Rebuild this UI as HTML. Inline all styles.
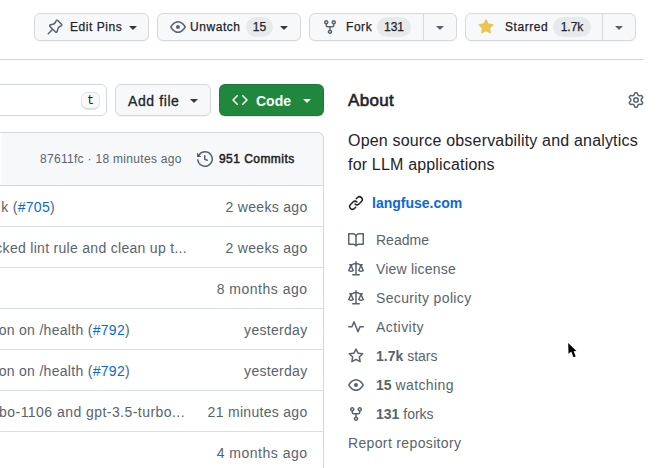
<!DOCTYPE html>
<html><head><meta charset="utf-8">
<style>
*{box-sizing:border-box;margin:0;padding:0}
html,body{width:666px;height:468px;overflow:hidden;background:#fff}
body{position:relative;font-family:"Liberation Sans",sans-serif;color:#1f2328}
.a{position:absolute;white-space:nowrap}
.btn{position:absolute;background:#f6f8fa;border:1px solid #d8d8d9;border-radius:6px;box-shadow:0 1px 0 rgba(31,35,40,0.04)}
.t12{font-size:12px;line-height:16px;color:#1f2328;-webkit-text-stroke:0.25px #1f2328;letter-spacing:0.55px}
.ic{position:absolute;fill:#59636e}
.cnt{position:absolute;height:20px;border-radius:10px;background:#e8e9ea;font-size:12px;line-height:20px;text-align:center;color:#1f2328;-webkit-text-stroke:0.25px #1f2328;letter-spacing:0}
.caret{position:absolute;width:16px;height:16px;fill:#34383d}
.div{position:absolute;top:0;width:1px;height:26px;background:#d8d8d9}
.row{position:absolute;left:-10px;width:334px;height:41px;border-bottom:1px solid #d8dee4;border-right:1px solid #d6d7d9}
.msg{position:absolute;font-size:14px;line-height:20px;color:#59636e;white-space:nowrap;letter-spacing:0.3px}
.date{position:absolute;right:358.5px;font-size:14px;line-height:20px;color:#59636e;white-space:nowrap;letter-spacing:0.3px}
.lnk{color:#0969da}
.li{position:absolute;left:348px;font-size:14px;line-height:20px;color:#59636e}
.li svg{position:absolute;left:0;top:2px;fill:#59636e}
.li span{position:absolute;left:28px;white-space:nowrap}
</style></head><body>

<!-- top action buttons -->
<div class="btn" style="left:34px;top:13px;width:115px;height:28px">
  <svg class="ic" style="left:12px;top:5px" width="16" height="16" viewBox="0 0 16 16"><path d="m11.294.984 3.722 3.722a1.75 1.75 0 0 1-.504 2.826l-1.327.613a3.089 3.089 0 0 0-1.707 2.084l-.584 2.454c-.317 1.332-1.972 1.8-2.94.832L5.75 11.311 1.78 15.28a.749.749 0 1 1-1.06-1.06l3.969-3.97-2.204-2.204c-.968-.968-.5-2.623.832-2.94l2.454-.584a3.08 3.08 0 0 0 2.084-1.707l.613-1.327a1.75 1.75 0 0 1 2.826-.504ZM6.283 9.723l2.732 2.731a.25.25 0 0 0 .42-.119l.584-2.454a4.586 4.586 0 0 1 2.537-3.098l1.328-.613a.25.25 0 0 0 .072-.404l-3.722-3.722a.25.25 0 0 0-.404.072l-.613 1.328a4.584 4.584 0 0 1-3.098 2.537l-2.454.584a.25.25 0 0 0-.119.42l2.731 2.732Z"/></svg>
  <div class="a t12" style="left:35px;top:5px">Edit Pins</div>
  <svg class="caret" style="left:90px;top:5px" viewBox="0 0 16 16"><path d="m4.427 7.427 3.396 3.396a.25.25 0 0 0 .354 0l3.396-3.396A.25.25 0 0 0 11.396 7H4.604a.25.25 0 0 0-.177.427Z"/></svg>
</div>

<div class="btn" style="left:157px;top:13px;width:144px;height:28px">
  <svg class="ic" style="left:12px;top:5px" width="16" height="16" viewBox="0 0 16 16"><path d="M8 2c1.981 0 3.671.992 4.933 2.078 1.27 1.091 2.187 2.345 2.637 3.023a1.62 1.62 0 0 1 0 1.798c-.45.678-1.367 1.932-2.637 3.023C11.67 13.008 9.981 14 8 14c-1.981 0-3.671-.992-4.933-2.078C1.797 10.83.88 9.576.43 8.898a1.62 1.62 0 0 1 0-1.798c.45-.677 1.367-1.931 2.637-3.022C4.33 2.992 6.019 2 8 2ZM1.679 7.932a.12.12 0 0 0 0 .136c.411.622 1.241 1.75 2.366 2.717C5.176 11.758 6.527 12.5 8 12.5c1.473 0 2.825-.742 3.955-1.715 1.124-.967 1.954-2.096 2.366-2.717a.12.12 0 0 0 0-.136c-.412-.621-1.242-1.75-2.366-2.717C10.824 4.242 9.473 3.5 8 3.5c-1.473 0-2.825.742-3.955 1.715-1.124.967-1.954 2.096-2.366 2.717ZM8 10a2 2 0 1 1-.001-3.999A2 2 0 0 1 8 10Z"/></svg>
  <div class="a t12" style="left:32px;top:5px">Unwatch</div>
  <div class="cnt" style="left:88px;top:3px;width:27px">15</div>
  <svg class="caret" style="left:118px;top:5px" viewBox="0 0 16 16"><path d="m4.427 7.427 3.396 3.396a.25.25 0 0 0 .354 0l3.396-3.396A.25.25 0 0 0 11.396 7H4.604a.25.25 0 0 0-.177.427Z"/></svg>
</div>

<div class="btn" style="left:309px;top:13px;width:148px;height:28px">
  <svg class="ic" style="left:12px;top:5px" width="16" height="16" viewBox="0 0 16 16"><path d="M5 5.372v.878c0 .414.336.75.75.75h4.5a.75.75 0 0 0 .75-.75v-.878a2.25 2.25 0 1 1 1.5 0v.878a2.25 2.25 0 0 1-2.25 2.25h-1.5v2.128a2.251 2.251 0 1 1-1.5 0V8.5h-1.5A2.25 2.25 0 0 1 3.5 6.25v-.878a2.25 2.25 0 1 1 1.5 0ZM5 3.25a.75.75 0 1 0-1.5 0 .75.75 0 0 0 1.5 0Zm6.75.75a.75.75 0 1 0 0-1.5.75.75 0 0 0 0 1.5Zm-3 8.75a.75.75 0 1 0-1.5 0 .75.75 0 0 0 1.5 0Z"/></svg>
  <div class="a t12" style="left:36px;top:5px">Fork</div>
  <div class="cnt" style="left:67px;top:3px;width:34px">131</div>
  <div class="div" style="left:113px"></div>
  <svg class="caret" style="left:122px;top:5px;fill:#59636e" viewBox="0 0 16 16"><path d="m4.427 7.427 3.396 3.396a.25.25 0 0 0 .354 0l3.396-3.396A.25.25 0 0 0 11.396 7H4.604a.25.25 0 0 0-.177.427Z"/></svg>
</div>

<div class="btn" style="left:465px;top:13px;width:171px;height:28px">
  <svg class="ic" style="left:12px;top:5px;fill:#eac54f" width="16" height="16" viewBox="0 0 16 16"><path d="M8 .25a.75.75 0 0 1 .673.418l1.882 3.815 4.21.612a.75.75 0 0 1 .416 1.279l-3.046 2.97.719 4.192a.751.751 0 0 1-1.088.791L8 12.347l-3.766 1.98a.75.75 0 0 1-1.088-.79l.72-4.194L.818 6.374a.75.75 0 0 1 .416-1.28l4.21-.611L7.327.668A.75.75 0 0 1 8 .25Z"/></svg>
  <div class="a t12" style="left:39px;top:5px">Starred</div>
  <div class="cnt" style="left:87px;top:3px;width:38px">1.7k</div>
  <div class="div" style="left:136px"></div>
  <svg class="caret" style="left:145px;top:5px;fill:#59636e" viewBox="0 0 16 16"><path d="m4.427 7.427 3.396 3.396a.25.25 0 0 0 .354 0l3.396-3.396A.25.25 0 0 0 11.396 7H4.604a.25.25 0 0 0-.177.427Z"/></svg>
</div>

<div class="a" style="left:0;top:59px;width:644px;height:1px;background:#d8d8d8"></div>

<!-- search / add file / code -->
<div class="a" style="left:-10px;top:84px;width:117px;height:32px;border:1px solid #d1d9e0;border-radius:6px;background:#fff"></div>
<div class="a" style="left:81px;top:92px;width:19px;height:18px;border:1px solid #e1e4e8;border-radius:6px;background:#f6f8fa;box-shadow:inset 0 -1px 0 #d8dde2;font-family:'Liberation Mono',monospace;font-size:12px;line-height:16px;text-align:center;color:#1f2328">t</div>

<div class="btn" style="left:115px;top:84px;width:96px;height:32px">
  <div class="a" style="left:12px;top:6px;font-size:14px;line-height:20px;color:#1f2328;-webkit-text-stroke:0.3px #1f2328;letter-spacing:0.6px">Add file</div>
  <svg class="caret" style="left:70px;top:7px" viewBox="0 0 16 16"><path d="m4.427 7.427 3.396 3.396a.25.25 0 0 0 .354 0l3.396-3.396A.25.25 0 0 0 11.396 7H4.604a.25.25 0 0 0-.177.427Z"/></svg>
</div>

<div class="a" style="left:219px;top:84px;width:105px;height:32px;background:#1f883d;border:1px solid rgba(31,35,40,0.15);border-radius:6px;box-shadow:0 1px 0 rgba(31,35,40,0.1)">
  <svg class="ic" style="left:12px;top:6.5px;fill:#fff" width="16" height="16" viewBox="0 0 16 16"><path d="m11.28 3.22 4.25 4.25a.75.75 0 0 1 0 1.06l-4.25 4.25a.749.749 0 0 1-1.275-.326.749.749 0 0 1 .215-.734L13.94 8l-3.72-3.72a.749.749 0 0 1 .326-1.275.749.749 0 0 1 .734.215Zm-6.56 0a.751.751 0 0 1 1.042.018.751.751 0 0 1 .018 1.042L2.06 8l3.72 3.72a.749.749 0 0 1-.326 1.275.749.749 0 0 1-.734-.215L.47 8.53a.75.75 0 0 1 0-1.06Z"/></svg>
  <div class="a" style="left:36px;top:5.5px;font-size:14px;line-height:20px;font-weight:bold;color:#fff">Code</div>
  <svg class="caret" style="left:79px;top:7px;fill:#fff" viewBox="0 0 16 16"><path d="m4.427 7.427 3.396 3.396a.25.25 0 0 0 .354 0l3.396-3.396A.25.25 0 0 0 11.396 7H4.604a.25.25 0 0 0-.177.427Z"/></svg>
</div>

<!-- file table -->
<div class="a" style="left:-10px;top:132px;width:334px;height:54px;background:#f6f8fa;border:1px solid #d6d7d9;border-left:0;border-radius:0 6px 0 0"></div>
<div class="a" style="left:0;top:133px;width:2px;height:52px;background:#fcfcfd"></div>
<div class="a" style="left:40px;top:151px;font-size:12px;line-height:16px;color:#59636e;letter-spacing:0.3px">87611fc · 18 minutes ago</div>
<svg class="ic" style="left:197px;top:151px" width="16" height="16" viewBox="0 0 16 16"><path d="m.427 1.927 1.215 1.215a8.002 8.002 0 1 1-1.6 5.685.75.75 0 1 1 1.493-.154 6.5 6.5 0 1 0 1.18-4.458l1.358 1.358A.25.25 0 0 1 3.896 6H.25A.25.25 0 0 1 0 5.75V2.104a.25.25 0 0 1 .427-.177ZM7.75 4a.75.75 0 0 1 .75.75v2.992l2.028.812a.75.75 0 0 1-.557 1.392l-2.5-1A.751.751 0 0 1 7 8.25v-3.5A.75.75 0 0 1 7.75 4Z"/></svg>
<div class="a" style="left:219px;top:151px;font-size:12px;line-height:16px;color:#1f2328;-webkit-text-stroke:0.5px #1f2328;letter-spacing:0.45px">951 Commits</div>

<div class="row" style="top:186px"></div>
<div class="row" style="top:227px"></div>
<div class="row" style="top:268px"></div>
<div class="row" style="top:309px"></div>
<div class="row" style="top:350px"></div>
<div class="row" style="top:391px"></div>
<div class="row" style="top:432px"></div>
<div class="msg" style="right:611px;top:197px">k (<span class="lnk">#705</span>)</div>
<div class="msg" style="right:479px;top:238px">cked lint rule and clean up t...</div>
<div class="msg" style="right:536px;top:320px">on on /health (<span class="lnk">#792</span>)</div>
<div class="msg" style="right:536px;top:361px">on on /health (<span class="lnk">#792</span>)</div>
<div class="msg" style="right:481px;top:402px;letter-spacing:0.45px">urbo-1106 and gpt-3.5-turbo...</div>
<div class="date" style="top:197px">2 weeks ago</div>
<div class="date" style="top:238px">2 weeks ago</div>
<div class="date" style="top:279px;letter-spacing:0.5px">8 months ago</div>
<div class="date" style="top:320px">yesterday</div>
<div class="date" style="top:361px">yesterday</div>
<div class="date" style="top:402px">21 minutes ago</div>
<div class="date" style="top:443px;letter-spacing:0.5px">4 months ago</div>

<!-- About -->
<div class="a" style="left:348px;top:91px;font-size:17px;line-height:20px;color:#1f2328;-webkit-text-stroke:0.6px #1f2328;letter-spacing:0.3px">About</div>
<svg class="ic" style="left:628px;top:92px" width="16" height="16" viewBox="0 0 16 16"><path d="M8 0a8.2 8.2 0 0 1 .701.031C9.444.095 9.99.645 10.16 1.29l.288 1.107c.018.066.079.158.212.224.231.114.454.243.668.386.123.082.233.09.299.071l1.103-.303c.644-.176 1.392.021 1.82.63.27.385.506.792.704 1.218.315.675.111 1.422-.364 1.891l-.814.806c-.049.048-.098.147-.088.294.016.257.016.515 0 .772-.01.147.038.246.088.294l.814.806c.475.469.679 1.216.364 1.891a7.977 7.977 0 0 1-.704 1.217c-.428.61-1.176.807-1.82.63l-1.102-.302c-.067-.019-.177-.011-.3.071a5.909 5.909 0 0 1-.668.386c-.133.066-.194.158-.211.224l-.29 1.106c-.168.646-.715 1.196-1.458 1.26a8.006 8.006 0 0 1-1.402 0c-.743-.064-1.289-.614-1.458-1.26l-.289-1.106c-.018-.066-.079-.158-.212-.224a5.738 5.738 0 0 1-.668-.386c-.123-.082-.233-.09-.299-.071l-1.103.303c-.644.176-1.392-.021-1.82-.63a8.12 8.12 0 0 1-.704-1.218c-.315-.675-.111-1.422.363-1.891l.815-.806c.05-.048.098-.147.088-.294a6.214 6.214 0 0 1 0-.772c.01-.147-.038-.246-.088-.294l-.815-.806C.635 6.045.431 5.298.746 4.623a7.92 7.92 0 0 1 .704-1.217c.428-.61 1.176-.807 1.820-.63l1.102.302c.067.019.177.011.3-.071.214-.143.437-.272.668-.386.133-.066.194-.158.211-.224l.29-1.106C6.009.645 6.556.095 7.299.03 7.53.01 7.764 0 8 0Zm-.571 1.525c-.036.003-.108.036-.137.146l-.289 1.105c-.147.561-.549.967-.998 1.189-.173.086-.34.183-.5.29-.417.278-.97.423-1.529.27l-1.103-.303c-.109-.03-.175.016-.195.045-.22.312-.412.644-.573.99-.014.031-.021.11.059.19l.815.806c.411.406.562.957.53 1.456a4.709 4.709 0 0 0 0 .582c.032.499-.119 1.05-.53 1.456l-.815.806c-.081.08-.073.159-.059.19.162.346.353.677.573.989.02.03.085.076.195.046l1.102-.303c.56-.153 1.113-.008 1.53.27.161.107.328.204.501.29.447.222.85.629.997 1.189l.289 1.105c.029.109.101.143.137.146a6.6 6.6 0 0 0 1.142 0c.036-.003.108-.036.137-.146l.289-1.105c.147-.561.549-.967.998-1.189.173-.086.34-.183.5-.29.417-.278.97-.423 1.529-.27l1.103.303c.109.029.175-.016.195-.045.22-.313.411-.644.573-.99.014-.031.021-.11-.059-.19l-.815-.806c-.411-.406-.562-.957-.53-1.456a4.709 4.709 0 0 0 0-.582c-.032-.499.119-1.05.53-1.456l.815-.806c.081-.08.073-.159.059-.19a6.464 6.464 0 0 0-.573-.989c-.02-.03-.085-.076-.195-.046l-1.102.303c-.56.153-1.113.008-1.53-.27a4.44 4.44 0 0 0-.501-.29c-.447-.222-.85-.629-.997-1.189l-.289-1.105c-.029-.11-.101-.143-.137-.146a6.6 6.6 0 0 0-1.142 0ZM11 8a3 3 0 1 1-6 0 3 3 0 0 1 6 0ZM9.5 8a1.5 1.5 0 1 0-3.001.001A1.5 1.5 0 0 0 9.5 8Z"/></svg>

<div class="a" style="left:348px;top:129px;font-size:16px;line-height:24px;color:#1f2328;letter-spacing:0.18px">Open source observability and analytics<br>for LLM applications</div>

<svg class="ic" style="left:348px;top:195px;fill:#1f2328" width="16" height="16" viewBox="0 0 16 16"><path d="m7.775 3.275 1.25-1.25a3.5 3.5 0 1 1 4.95 4.95l-2.5 2.5a3.5 3.5 0 0 1-4.95 0 .751.751 0 0 1 .018-1.042.751.751 0 0 1 1.042-.018 1.998 1.998 0 0 0 2.83 0l2.5-2.5a2.002 2.002 0 0 0-2.83-2.830l-1.25 1.25a.751.751 0 0 1-1.042-.018.751.751 0 0 1-.018-1.042Zm-4.69 9.64a1.998 1.998 0 0 0 2.830 0l1.25-1.25a.751.751 0 0 1 1.042.018.751.751 0 0 1 .018 1.042l-1.25 1.25a3.5 3.5 0 1 1-4.95-4.95l2.5-2.5a3.5 3.5 0 0 1 4.95 0 .751.751 0 0 1-.018 1.042.751.751 0 0 1-1.042.018 1.998 1.998 0 0 0-2.830 0l-2.5 2.5a1.998 1.998 0 0 0 0 2.830Z"/></svg>
<div class="a" style="left:372px;top:193px;font-size:14px;line-height:20px;font-weight:bold;color:#0969da">langfuse.com</div>

<div class="li" style="top:230px"><svg width="16" height="16" viewBox="0 0 16 16"><path d="M0 1.75A.75.75 0 0 1 .75 1h4.253c1.227 0 2.317.59 3 1.501A3.743 3.743 0 0 1 11.006 1h4.245a.75.75 0 0 1 .75.75v10.5a.75.75 0 0 1-.75.75h-4.507a2.25 2.25 0 0 0-1.591.659l-.622.621a.75.75 0 0 1-1.06 0l-.622-.621A2.25 2.25 0 0 0 5.258 13H.75a.75.75 0 0 1-.75-.75Zm7.251 10.324.004-5.073-.002-2.253A2.25 2.25 0 0 0 5.003 2.5H1.5v9h3.757a3.75 3.75 0 0 1 1.994.574ZM8.755 4.75l-.004 7.322a3.752 3.752 0 0 1 1.992-.572H14.5v-9h-3.495a2.25 2.25 0 0 0-2.25 2.25Z"/></svg><span>Readme</span></div>
<div class="li" style="top:259px"><svg width="16" height="16" viewBox="0 0 16 16"><path d="M8.75.75V2h.985c.304 0 .603.08.867.231l1.29.736c.038.022.08.033.124.033h2.234a.75.75 0 0 1 0 1.5h-.427l2.111 4.692a.75.75 0 0 1-.154.838l-.53-.53.529.531-.001.002-.002.002-.006.006-.006.005-.01.01-.045.04c-.21.176-.441.327-.686.45C14.556 10.78 13.88 11 13 11a4.498 4.498 0 0 1-2.023-.454 3.544 3.544 0 0 1-.686-.45l-.045-.04-.016-.015-.006-.006-.004-.004v-.001a.75.75 0 0 1-.154-.838L12.178 4.5h-.162c-.305 0-.604-.079-.868-.231l-1.29-.736a.245.245 0 0 0-.124-.033H8.75V13h2.5a.75.75 0 0 1 0 1.5h-6.5a.75.75 0 0 1 0-1.5h2.5V3.5h-.984a.245.245 0 0 0-.124.033l-1.289.737c-.265.15-.564.23-.869.23h-.162l2.112 4.692a.75.75 0 0 1-.154.838l-.53-.53.529.531-.001.002-.002.002-.006.006-.016.015-.045.04c-.21.176-.441.327-.686.45C4.556 10.78 3.88 11 3 11a4.498 4.498 0 0 1-2.023-.454 3.544 3.544 0 0 1-.686-.45l-.045-.04-.016-.015-.006-.006-.004-.004v-.001a.75.75 0 0 1-.154-.838L2.178 4.5H1.75a.75.75 0 0 1 0-1.5h2.234a.249.249 0 0 0 .125-.033l1.288-.737c.265-.15.564-.23.869-.23h.984V.75a.75.75 0 0 1 1.5 0Zm2.945 8.477c.285.135.718.273 1.305.273s1.02-.138 1.305-.273L13 6.327Zm-10 0c.285.135.718.273 1.305.273s1.02-.138 1.305-.273L3 6.327Z"/></svg><span style="letter-spacing:0.2px">View license</span></div>
<div class="li" style="top:288px"><svg width="16" height="16" viewBox="0 0 16 16"><path d="M8.75.75V2h.985c.304 0 .603.08.867.231l1.29.736c.038.022.08.033.124.033h2.234a.75.75 0 0 1 0 1.5h-.427l2.111 4.692a.75.75 0 0 1-.154.838l-.53-.53.529.531-.001.002-.002.002-.006.006-.006.005-.01.01-.045.04c-.21.176-.441.327-.686.45C14.556 10.78 13.88 11 13 11a4.498 4.498 0 0 1-2.023-.454 3.544 3.544 0 0 1-.686-.45l-.045-.04-.016-.015-.006-.006-.004-.004v-.001a.75.75 0 0 1-.154-.838L12.178 4.5h-.162c-.305 0-.604-.079-.868-.231l-1.29-.736a.245.245 0 0 0-.124-.033H8.75V13h2.5a.75.75 0 0 1 0 1.5h-6.5a.75.75 0 0 1 0-1.5h2.5V3.5h-.984a.245.245 0 0 0-.124.033l-1.289.737c-.265.15-.564.23-.869.23h-.162l2.112 4.692a.75.75 0 0 1-.154.838l-.53-.53.529.531-.001.002-.002.002-.006.006-.016.015-.045.04c-.21.176-.441.327-.686.45C4.556 10.78 3.88 11 3 11a4.498 4.498 0 0 1-2.023-.454 3.544 3.544 0 0 1-.686-.45l-.045-.04-.016-.015-.006-.006-.004-.004v-.001a.75.75 0 0 1-.154-.838L2.178 4.5H1.75a.75.75 0 0 1 0-1.5h2.234a.249.249 0 0 0 .125-.033l1.288-.737c.265-.15.564-.23.869-.23h.984V.75a.75.75 0 0 1 1.5 0Zm2.945 8.477c.285.135.718.273 1.305.273s1.02-.138 1.305-.273L13 6.327Zm-10 0c.285.135.718.273 1.305.273s1.02-.138 1.305-.273L3 6.327Z"/></svg><span style="letter-spacing:0.35px">Security policy</span></div>
<div class="li" style="top:317px"><svg width="16" height="16" viewBox="0 0 16 16"><path d="M6 2c.306 0 .582.187.696.471L10 10.731l1.304-3.26A.751.751 0 0 1 12 7h3.25a.75.75 0 0 1 0 1.5h-2.742l-1.812 4.528a.751.751 0 0 1-1.392 0L6 4.77 4.696 8.03A.75.75 0 0 1 4 8.5H.75a.75.75 0 0 1 0-1.5h2.742l1.812-4.529A.751.751 0 0 1 6 2Z"/></svg><span style="letter-spacing:0.45px">Activity</span></div>
<div class="li" style="top:346px"><svg width="16" height="16" viewBox="0 0 16 16"><path d="M8 .25a.75.75 0 0 1 .673.418l1.882 3.815 4.21.612a.75.75 0 0 1 .416 1.279l-3.046 2.97.719 4.192a.751.751 0 0 1-1.088.791L8 12.347l-3.766 1.98a.75.75 0 0 1-1.088-.79l.72-4.194L.818 6.374a.75.75 0 0 1 .416-1.28l4.21-.611L7.327.668A.75.75 0 0 1 8 .25Zm0 2.445L6.615 5.5a.75.75 0 0 1-.564.41l-3.097.45 2.24 2.184a.75.75 0 0 1 .216.664l-.528 3.084 2.769-1.456a.75.75 0 0 1 .698 0l2.77 1.456-.53-3.084a.75.75 0 0 1 .216-.664l2.24-2.183-3.096-.45a.75.75 0 0 1-.564-.41L8 2.694Z"/></svg><span><b>1.7k</b> stars</span></div>
<div class="li" style="top:375px"><svg width="16" height="16" viewBox="0 0 16 16"><path d="M8 2c1.981 0 3.671.992 4.933 2.078 1.27 1.091 2.187 2.345 2.637 3.023a1.62 1.62 0 0 1 0 1.798c-.45.678-1.367 1.932-2.637 3.023C11.67 13.008 9.981 14 8 14c-1.981 0-3.671-.992-4.933-2.078C1.797 10.83.88 9.576.43 8.898a1.62 1.62 0 0 1 0-1.798c.45-.677 1.367-1.931 2.637-3.022C4.33 2.992 6.019 2 8 2ZM1.679 7.932a.12.12 0 0 0 0 .136c.411.622 1.241 1.75 2.366 2.717C5.176 11.758 6.527 12.5 8 12.5c1.473 0 2.825-.742 3.955-1.715 1.124-.967 1.954-2.096 2.366-2.717a.12.12 0 0 0 0-.136c-.412-.621-1.242-1.75-2.366-2.717C10.824 4.242 9.473 3.5 8 3.5c-1.473 0-2.825.742-3.955 1.715-1.124.967-1.954 2.096-2.366 2.717ZM8 10a2 2 0 1 1-.001-3.999A2 2 0 0 1 8 10Z"/></svg><span><b>15</b> <span style="position:static;letter-spacing:0.4px">watching</span></span></div>
<div class="li" style="top:404px"><svg width="16" height="16" viewBox="0 0 16 16"><path d="M5 5.372v.878c0 .414.336.75.75.75h4.5a.75.75 0 0 0 .75-.75v-.878a2.25 2.25 0 1 1 1.5 0v.878a2.25 2.25 0 0 1-2.25 2.25h-1.5v2.128a2.251 2.251 0 1 1-1.5 0V8.5h-1.5A2.25 2.25 0 0 1 3.5 6.25v-.878a2.25 2.25 0 1 1 1.5 0ZM5 3.25a.75.75 0 1 0-1.5 0 .75.75 0 0 0 1.5 0Zm6.75.75a.75.75 0 1 0 0-1.5.75.75 0 0 0 0 1.5Zm-3 8.75a.75.75 0 1 0-1.5 0 .75.75 0 0 0 1.5 0Z"/></svg><span><b>131</b> forks</span></div>
<div class="a" style="left:348px;top:433px;font-size:14px;line-height:20px;color:#59636e;letter-spacing:0.35px">Report repository</div>

<!-- mouse cursor -->
<svg class="a" style="left:565px;top:341px" width="16" height="20" viewBox="0 0 16 20"><path d="M3.2 2 L3.5 12.8 L6.3 10.5 L8.5 16.3 L10.7 15.4 L8.6 10.3 L11.4 10.1 Z" fill="#000"/></svg>

</body></html>
